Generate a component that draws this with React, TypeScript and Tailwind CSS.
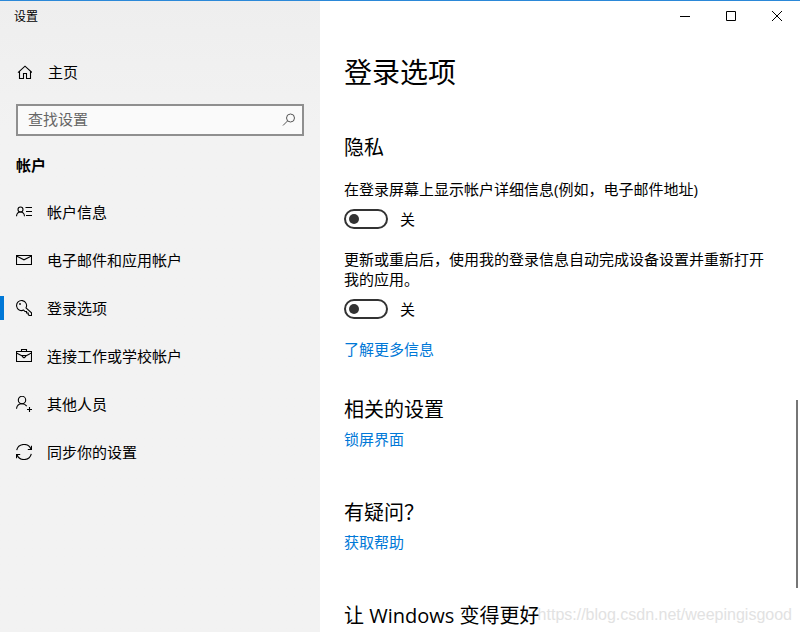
import { useState } from "react";
import type { ReactNode } from "react";

const strokeProps = {
  width: 16,
  height: 16,
  viewBox: "0 0 16 16",
  fill: "none",
  stroke: "currentColor",
  strokeWidth: 1.1,
  "aria-hidden": true,
};

const HomeIcon = () => (
  <svg {...strokeProps}>
    <path d="M2 8.6 9 2.2l7 6.4M3.5 7.4v7.1h4V9.5h3v5h4V7.4" />
  </svg>
);

const AccountIcon = () => (
  <svg {...strokeProps}>
    <circle cx="4.5" cy="5.5" r="2.5" />
    <path d="M.5 12.2C.7 9.6 2.3 8 4.5 8s3.8 1.6 4 4.2M9.500 3.500H16M10 7.500h6M10 11.500h6" />
  </svg>
);

const MailIcon = () => (
  <svg {...strokeProps}>
    <path d="M.5 3.500h15v9H.5zM.5 4 8 7.800 15.500 4" />
  </svg>
);

const KeyIcon = () => (
  <svg {...strokeProps}>
    <path d="M10 7.900a5 5 0 1 0-2.300 2.200l1.300 1.400h1.500v1.500h1.700v1.500l1 1h2.300v-2.600z" />
    <circle cx="4" cy="4" r=".9" fill="currentColor" stroke="none" />
  </svg>
);

const BriefcaseIcon = () => (
  <svg {...strokeProps}>
    <path d="M.5 3.500h15v10H.5zM5.500 3.500v-2h5v2M.5 5l5.800 3M9.700 8l5.800-3M6.500 7.500h3v1.300L8 9.800 6.500 8.800z" />
  </svg>
);

const PeopleIcon = () => (
  <svg {...strokeProps}>
    <circle cx="6" cy="4" r="3.700" />
    <path d="M.5 12.800C.8 9.700 3 7.700 6 7.700c2 0 3.700.9 4.700 2.400M13.500 11v5M11 13.500h5" />
  </svg>
);

const SyncIcon = () => (
  <svg {...strokeProps}>
    <path d="M.7 6.200A7.500 7.500 0 0 1 15 5.300M15.500 1.800v3.700h-3.700M15.300 9.800A7.500 7.500 0 0 1 1 10.700M.5 14.200v-3.700h3.700" />
  </svg>
);

const navItems: { id: string; label: string; icon: ReactNode }[] = [
  { id: "info", label: "帐户信息", icon: <AccountIcon /> },
  { id: "email", label: "电子邮件和应用帐户", icon: <MailIcon /> },
  { id: "signin", label: "登录选项", icon: <KeyIcon /> },
  { id: "work", label: "连接工作或学校帐户", icon: <BriefcaseIcon /> },
  { id: "others", label: "其他人员", icon: <PeopleIcon /> },
  { id: "sync", label: "同步你的设置", icon: <SyncIcon /> },
];

function Toggle({ label }: { label: string }) {
  const [on, setOn] = useState(false);

  return (
    <div className="mb-5">
      <label className="block">
        <span className="block mb-2.5">{label}</span>
        <span className="flex items-center gap-3 h-5">
          <input
            type="checkbox"
            role="switch"
            checked={on}
            onChange={e => setOn(e.target.checked)}
            className="appearance-none flex items-center w-11 h-5 px-[3px] rounded-full border-2 border-[#333] before:block before:size-2.5 before:rounded-full before:bg-[#333] checked:justify-end checked:border-[#0078d7] checked:bg-[#0078d7] checked:before:bg-white"
          />
          <span>{on ? "开" : "关"}</span>
        </span>
      </label>
    </div>
  );
}

export default function App() {
  const [active, setActive] = useState("signin");
  const [query, setQuery] = useState("");

  return (
    <div
      lang="zh-CN"
      className="relative flex h-screen overflow-hidden bg-white text-black text-[15px] leading-5 font-['Open_Sans','Noto_Sans_CJK_SC',sans-serif]"
    >
      <div className="absolute inset-x-0 top-0 h-px bg-[#2b88d8]" />

      {/* Sidebar */}
      <aside className="w-80 shrink-0 bg-linear-to-b from-[#eeeeee] to-[#f2f2f2] to-20%">
        <div className="flex items-center h-8 px-3.5 pt-0.5 text-xs">设置</div>

        <a href="#home" className="flex items-center gap-4 h-12 mt-4 px-4">
          <HomeIcon />
          主页
        </a>

        <div className="relative mx-4 mt-2">
          <input
            type="text"
            aria-label="查找设置"
            placeholder="查找设置"
            value={query}
            onChange={e => setQuery(e.target.value)}
            className="block w-full h-8 pl-2.5 pr-8 pb-0.5 border-2 border-[#8f8f8f] bg-[#fafafa] outline-none placeholder:text-[#666]"
          />
          <svg
            className="absolute right-2 top-2 text-[#555]"
            width="16"
            height="16"
            viewBox="0 0 16 16"
            fill="none"
            stroke="currentColor"
            aria-hidden="true"
          >
            <circle cx="10.500" cy="6" r="4" />
            <path d="M7.600 8.900 3 13.500" />
          </svg>
        </div>

        <h2 className="mt-[17px] mb-[11px] px-4 leading-6 font-bold">帐户</h2>

        <nav>
          {navItems.map(item => (
            <a
              key={item.id}
              href={`#${item.id}`}
              onClick={() => setActive(item.id)}
              className="flex items-center h-12"
            >
              <span className={`w-1 h-6 mr-3 ${active === item.id ? "bg-[#0078d7]" : ""}`} />
              {item.icon}
              <span className="ml-[15px]">{item.label}</span>
            </a>
          ))}
        </nav>
      </aside>

      {/* Content */}
      <main className="relative flex-1 min-w-0 overflow-hidden">
        <div className="flex justify-end h-8">
          <button type="button" aria-label="最小化" className="flex items-center justify-center w-[46px]">
            <svg width="10" height="10" viewBox="0 0 10 10" stroke="currentColor" aria-hidden="true">
              <path d="M0 5.500h10" />
            </svg>
          </button>
          <button type="button" aria-label="最大化" className="flex items-center justify-center w-[46px]">
            <svg width="10" height="10" viewBox="0 0 10 10" fill="none" stroke="currentColor" aria-hidden="true">
              <path d="M.5.5h9v9h-9z" />
            </svg>
          </button>
          <button type="button" aria-label="关闭" className="flex items-center justify-center w-[46px]">
            <svg width="10" height="10" viewBox="0 0 10 10" stroke="currentColor" aria-hidden="true">
              <path d="m0 0 10 10M10 0 0 10" />
            </svg>
          </button>
        </div>

        <div className="px-6 pt-[22px]">
          <h1 className="mb-11 text-[28px] leading-9">登录选项</h1>

          <section className="mb-[37px]">
            <h2 className="mb-[17px] text-xl leading-7">隐私</h2>
            <Toggle label="在登录屏幕上显示帐户详细信息(例如，电子邮件地址)" />
            <Toggle label="更新或重启后，使用我的登录信息自动完成设备设置并重新打开我的应用。" />
            <a href="#more" className="block w-fit text-[#0078d7]">了解更多信息</a>
          </section>

          <section className="mb-[50px]">
            <h2 className="mb-[5px] text-xl leading-7">相关的设置</h2>
            <a href="#lock" className="block w-fit text-[#0078d7]">锁屏界面</a>
          </section>

          <section className="mb-[50px]">
            <h2 className="mb-[5px] text-xl leading-7">有疑问？</h2>
            <a href="#help" className="block w-fit text-[#0078d7]">获取帮助</a>
          </section>

          <h2 className="text-xl leading-7 whitespace-nowrap">让 Windows 变得更好</h2>
        </div>

        {/* Scroll thumb */}
        <div className="absolute right-0.5 top-100 w-0.5 h-47 bg-[#767676]" />
      </main>

      <span className="absolute right-2 bottom-[7px] text-base leading-5 text-[#e2e2e2] font-['Liberation_Sans',sans-serif]">
        https://blog.csdn.net/weepingisgood
      </span>
    </div>
  );
}
